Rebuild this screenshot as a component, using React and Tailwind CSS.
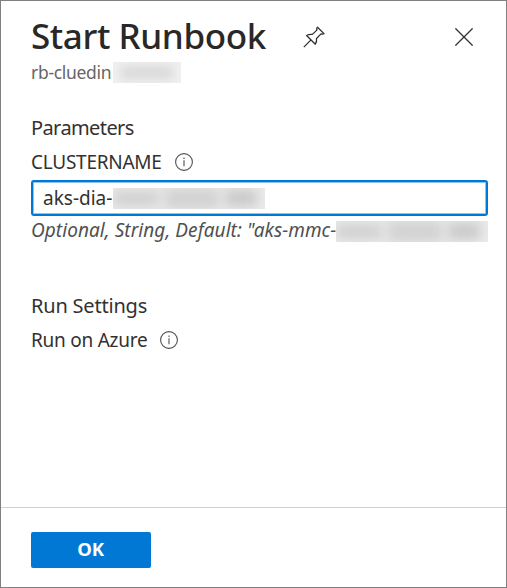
function InfoIcon() {
  return (
    <svg width="19" height="19" viewBox="0 0 19 19" fill="none" stroke="#505050" className="shrink-0">
      <circle cx="9" cy="9" r="8.4" strokeWidth="1.1" />
      <path d="M9 7.3v6M9 4.6v1.4" strokeWidth="1.1" />
    </svg>
  );
}

function PinIcon() {
  return (
    <svg width="22" height="22" viewBox="0 0 22 22" fill="none" stroke="#323130" strokeWidth="1.3" strokeLinejoin="round" className="shrink-0">
      <path d="M14.5 1.2L21 7.6L19.6 8.1L18 7.9L13.5 12.5C13.8 14.5 13.5 16.5 12.3 18.2L3.6 9.5C5.4 8.4 7.2 8.1 9.3 8.4L13.9 4.1L13.7 2.5ZM8 13.9L.8 21.1" />
    </svg>
  );
}

function CloseIcon() {
  return (
    <svg width="18" height="18" viewBox="0 0 18 18" stroke="#323130" strokeWidth="1.3" className="shrink-0">
      <path d="M.4 .4L17.6 17.6M17.6 .4L.4 17.6" />
    </svg>
  );
}

function RedactedValue() {
  return (
    <span className="flex h-[21px] w-full items-center gap-[6px] overflow-hidden bg-[#ebebeb]">
      <span className="h-[15px] w-[46px] bg-[#d0d0d0] blur-[6px]" />
      <span className="h-[21px] w-[54px] bg-[#d2d2d2] blur-[6px]" />
      <span className="h-[16px] w-[32px] bg-[#c8c8c8] blur-[6px]" />
    </span>
  );
}

export default function App() {
  return (
    <main className="flex h-[588px] w-[507px] flex-col overflow-hidden border border-[#808080] bg-white font-['Noto_Sans',sans-serif] text-[#323130]">
      <header className="flex h-[84px] flex-col pl-[30px] pt-[14px]">
        <div className="flex h-[43px] items-center">
          <h1 className="w-[272px] whitespace-nowrap pb-[2px] text-[35px] font-medium leading-[43px] tracking-[-0.4px] text-[#292827]">Start Runbook</h1>
          <PinIcon />
          <span className="ml-[130px]"><CloseIcon /></span>
        </div>
        <div className="mt-[4px] flex h-[21px] items-center">
          <span className="w-[82px] whitespace-nowrap text-[17.5px] leading-[21px] tracking-[-0.3px] text-[#666]">rb-cluedin</span>
          <span className="flex h-[21px] w-[68px] items-center justify-center overflow-hidden bg-[#f0f0f0]">
            <span className="h-[13px] w-[52px] bg-[#d9d9d9] blur-[5px]" />
          </span>
        </div>
      </header>
      <section className="px-[30px] pt-[29px]">
        <h2 className="h-[28px] whitespace-nowrap text-[20px] leading-[28px] tracking-[-0.6px]">Parameters</h2>
        <div className="mt-[6px] flex h-[28px] items-center">
          <span className="w-[144px] whitespace-nowrap text-[19px] leading-[28px] tracking-[-0.25px]">CLUSTERNAME</span>
          <InfoIcon />
        </div>
        <div className="mt-[4px] flex h-[36px] w-[457px] items-center rounded-[3px] border-2 border-[#0078d4] pl-[10px] shadow-[inset_0_0_0_1px_#8fc4ee]">
          <span className="w-[70px] whitespace-nowrap text-[19px] leading-[26px]">aks-dia-</span>
          <span className="w-[152px]"><RedactedValue /></span>
        </div>
        <div className="mt-[4px] flex h-[22px] w-[457px] items-center">
          <span className="w-[305px] whitespace-nowrap pb-[2px] text-[19px] italic leading-[20px] tracking-[0.06px] text-[#505050]">Optional, String, Default: "aks-mmc-</span>
          <span className="w-[152px]"><RedactedValue /></span>
        </div>
      </section>
      <section className="px-[30px] pt-[50px]">
        <h2 className="h-[28px] whitespace-nowrap text-[20px] leading-[28px] tracking-[-0.2px]">Run Settings</h2>
        <div className="mt-[6px] flex h-[28px] items-center">
          <span className="w-[129px] whitespace-nowrap text-[19px] leading-[28px] tracking-[-0.25px]">Run on Azure</span>
          <InfoIcon />
        </div>
      </section>
      <footer className="mt-auto h-[80px] shrink-0 border-t border-[#d2d0ce] pl-[30px] pt-[24px]">
        <button className="flex h-[36px] w-[120px] items-center justify-center rounded-[2px] bg-[#0078d4] pb-[3px] pr-[1px] text-[18.5px] font-bold leading-[33px] tracking-[-0.3px] text-white">OK</button>
      </footer>
    </main>
  );
}
